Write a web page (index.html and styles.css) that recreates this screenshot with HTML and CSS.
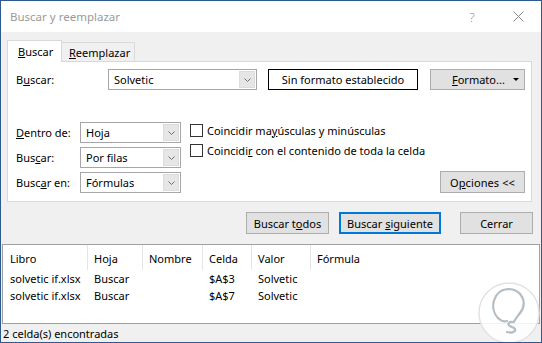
FILE: index.html
```html
<!DOCTYPE html>
<html lang="es">
<head>
    <meta charset="UTF-8">
    <title>Buscar y reemplazar</title>
    <link rel="stylesheet" href="styles.css">
</head>
<body>
    <div class="window">
        <div class="titlebar">
            <span class="title">Buscar y reemplazar</span>
            <div class="title-buttons">
                <span class="title-btn help">?</span>
                <span class="title-btn">
                    <svg width="11" height="11" viewBox="0 0 11 11"><path d="M0.5 0.5 L10.5 10.5 M10.5 0.5 L0.5 10.5" stroke="#8a8a8a" stroke-width="1"/></svg>
                </span>
            </div>
        </div>

        <div class="main">
            <div class="tabs">
                <div class="tab active"><span><u>B</u>uscar</span></div>
                <div class="tab"><span><u>R</u>eemplazar</span></div>
            </div>

            <div class="panel">
                <div class="find-row">
                    <span class="label label-find">B<u>u</u>scar:</span>
                    <div class="combo combo-find">
                        <span class="combo-text">Solvetic</span>
                        <span class="combo-btn"><svg width="7" height="4" viewBox="0 0 7 4"><path d="M0.5 0.5 L3.5 3.5 L6.5 0.5" fill="none" stroke="#707070"/></svg></span>
                    </div>
                    <div class="format-box">Sin formato establecido</div>
                    <div class="btn btn-format"><span><u>F</u>ormato...</span><span class="caret"></span></div>
                </div>

                <div class="options">
                    <div class="fields">
                        <div class="field">
                            <span class="label"><u>D</u>entro de:</span>
                            <div class="combo">
                                <span class="combo-text">Hoja</span>
                                <span class="combo-btn"><svg width="7" height="4" viewBox="0 0 7 4"><path d="M0.5 0.5 L3.5 3.5 L6.5 0.5" fill="none" stroke="#707070"/></svg></span>
                            </div>
                        </div>
                        <div class="field">
                            <span class="label">Bus<u>c</u>ar:</span>
                            <div class="combo">
                                <span class="combo-text">Por filas</span>
                                <span class="combo-btn"><svg width="7" height="4" viewBox="0 0 7 4"><path d="M0.5 0.5 L3.5 3.5 L6.5 0.5" fill="none" stroke="#707070"/></svg></span>
                            </div>
                        </div>
                        <div class="field">
                            <span class="label">Busc<u>a</u>r en:</span>
                            <div class="combo">
                                <span class="combo-text">Fórmulas</span>
                                <span class="combo-btn"><svg width="7" height="4" viewBox="0 0 7 4"><path d="M0.5 0.5 L3.5 3.5 L6.5 0.5" fill="none" stroke="#707070"/></svg></span>
                            </div>
                        </div>
                    </div>

                    <div class="checks">
                        <div class="check"><span class="box"></span><span>Coincidir ma<u>y</u>úsculas y minúsculas</span></div>
                        <div class="check"><span class="box"></span><span>Coincidi<u>r</u> con el contenido de toda la celda</span></div>
                    </div>

                    <div class="btn btn-options"><span>O<u>p</u>ciones &lt;&lt;</span></div>
                </div>
            </div>

            <div class="actions">
                <div class="btn btn-all"><span>Buscar t<u>o</u>dos</span></div>
                <div class="btn btn-next"><span>Buscar <u>s</u>iguiente</span></div>
                <div class="btn btn-close"><span>Cerrar</span></div>
            </div>
        </div>

        <div class="results">
            <table>
                <colgroup>
                    <col class="c-libro">
                    <col class="c-hoja">
                    <col class="c-nombre">
                    <col class="c-celda">
                    <col class="c-valor">
                    <col>
                </colgroup>
                <thead>
                    <tr>
                        <th class="first">Libro</th>
                        <th>Hoja</th>
                        <th>Nombre</th>
                        <th>Celda</th>
                        <th>Valor</th>
                        <th class="last">Fórmula</th>
                    </tr>
                </thead>
                <tbody>
                    <tr>
                        <td class="first">solvetic if.xlsx</td>
                        <td>Buscar</td>
                        <td></td>
                        <td>$A$3</td>
                        <td>Solvetic</td>
                        <td></td>
                    </tr>
                    <tr>
                        <td class="first">solvetic if.xlsx</td>
                        <td>Buscar</td>
                        <td></td>
                        <td>$A$7</td>
                        <td>Solvetic</td>
                        <td></td>
                    </tr>
                </tbody>
            </table>
        </div>

        <div class="status">2 celda(s) encontradas</div>

        <!-- marca de agua -->
        <svg class="watermark" width="64" height="64" viewBox="0 0 64 64">
            <circle cx="32" cy="32" r="30" fill="#ffffff" fill-opacity="0.85" stroke="#e2e2e2" stroke-width="1.5"/>
            <path d="M21 37 C12 28 16 9 31 8 C45 8 51 22 43 32 C40 36 38 38 37 41 C31 40 29 44 35 46 C41 48 38 53 30 51" fill="none" stroke="#b4bcc4" stroke-width="2.2" stroke-linecap="round" stroke-linejoin="round"/>
            <path d="M21 37 C24 40 27 41 30 40" fill="none" stroke="#b4bcc4" stroke-width="2.2" stroke-linecap="round"/>
        </svg>
    </div>
</body>
</html>
```

FILE: styles.css
```css
/* Ventana de diálogo */
* {
    box-sizing: border-box;
}

body {
    margin: 0;
    font-family: "Noto Sans", sans-serif;
    font-size: 11px;
    color: #000;
    background-color: #fff;
}

u {
    text-underline-offset: 1px;
}

.window {
    position: relative;
    width: 542px;
    height: 343px;
    border: 1px solid #2d5b8f;
    background-color: #f0f0f0;
    display: flex;
    flex-direction: column;
    overflow: hidden;
}

/* Barra de título */
.titlebar {
    flex: none;
    height: 31px;
    background-color: #fff;
    display: flex;
    align-items: center;
    padding-left: 9px;
}

.title {
    color: #9a9a9a;
    font-size: 11.5px;
}

.title-buttons {
    margin-left: auto;
    display: flex;
    height: 100%;
}

.title-btn {
    width: 46px;
    display: flex;
    align-items: center;
    justify-content: center;
}

.help {
    color: #8a8a8a;
    font-size: 13px;
    font-family: "Open Sans", sans-serif;
    font-weight: 300;
}

/* Pestañas */
.main {
    flex: none;
    padding: 8px 9px 0 6px;
}

.tabs {
    display: flex;
    align-items: flex-end;
    height: 21px;
}

.tab {
    height: 19px;
    padding-left: 7px;
    width: 73px;
    display: flex;
    align-items: center;
    border: 1px solid #d9d9d9;
    border-bottom: none;
    border-left: none;
    background-color: #f0f0f0;
}

.tab.active {
    position: relative;
    z-index: 1;
    width: 55px;
    height: 22px;
    margin-bottom: -1px;
    padding-left: 10px;
    padding-bottom: 1px;
    border-left: 1px solid #d9d9d9;
    background-color: #fff;
}

.panel {
    border: 1px solid #d9d9d9;
    background-color: #fff;
    padding: 7px 6px 8px 8px;
}

.label {
    width: 64px;
    flex: none;
}

.label-find {
    width: 92px;
}

.find-row {
    display: flex;
    align-items: center;
    height: 21px;
}

/* Cuadros combinados */
.combo {
    display: flex;
    width: 101px;
    height: 21px;
    border: 1px solid #a6a6a6;
    background-color: #fff;
}

.combo-find {
    width: 149px;
}

.combo-text {
    flex: 1;
    padding-left: 5px;
    display: flex;
    align-items: center;
}

.combo-btn {
    width: 16px;
    margin: 1px;
    background-color: #e6e6e6;
    border: 1px solid #dcdcdc;
    display: flex;
    align-items: center;
    justify-content: center;
}

.format-box {
    width: 150px;
    height: 21px;
    margin-left: 11px;
    border: 1px solid #000;
    display: flex;
    align-items: center;
    justify-content: center;
}

/* Botones */
.btn {
    height: 22px;
    border: 1px solid #adadad;
    background-color: #e1e1e1;
    display: flex;
    align-items: center;
    justify-content: center;
}

.btn-format {
    width: 95px;
    height: 21px;
    margin-left: 12px;
    justify-content: flex-start;
    padding: 0 5px 0 21px;
}

.caret {
    margin-left: auto;
    width: 0;
    height: 0;
    border-left: 3px solid transparent;
    border-right: 3px solid transparent;
    border-top: 3px solid #000;
}

.options {
    display: flex;
    margin-top: 32px;
}

.fields {
    display: flex;
    flex-direction: column;
    gap: 4px;
}

.field {
    display: flex;
    align-items: center;
}

.checks {
    margin-left: 9px;
    margin-top: -2px;
}

.check {
    display: flex;
    align-items: center;
    height: 20px;
}

.box {
    width: 13px;
    height: 13px;
    border: 1px solid #333;
    background-color: #fff;
    margin-right: 4px;
}

.btn-options {
    margin-left: auto;
    align-self: flex-end;
    width: 85px;
    letter-spacing: 0.1px;
}

.actions {
    display: flex;
    justify-content: flex-end;
    margin: 10px -1px 10px 0;
}

.btn-all {
    width: 83px;
}

.btn-next {
    width: 102px;
    margin-left: 10px;
    border: 2px solid #0078d7;
}

.btn-close {
    width: 73px;
    margin-left: 19px;
}

/* Lista de resultados */
.results {
    flex: none;
    height: 80px;
    margin: 0 1px;
    border: 1px solid #a0a0a0;
    background-color: #fff;
}

table {
    width: 100%;
    table-layout: fixed;
    border-collapse: separate;
    border-spacing: 0;
}

.c-libro { width: 85px; }
.c-hoja { width: 55px; }
.c-nombre { width: 60px; }
.c-celda { width: 49px; }
.c-valor { width: 59px; }

th {
    height: 25px;
    padding: 2px 0 0 6px;
    font-weight: normal;
    text-align: left;
    border-right: 1px solid #e5e5e5;
}

th.last {
    border-right: none;
}

td {
    height: 17px;
    padding: 0 0 0 6px;
    white-space: nowrap;
}

th.first, td.first {
    padding-left: 7px;
}

.status {
    flex: 1;
    padding-left: 2px;
    display: flex;
    align-items: center;
}

.watermark {
    position: absolute;
    left: 476px;
    top: 280px;
}
```
